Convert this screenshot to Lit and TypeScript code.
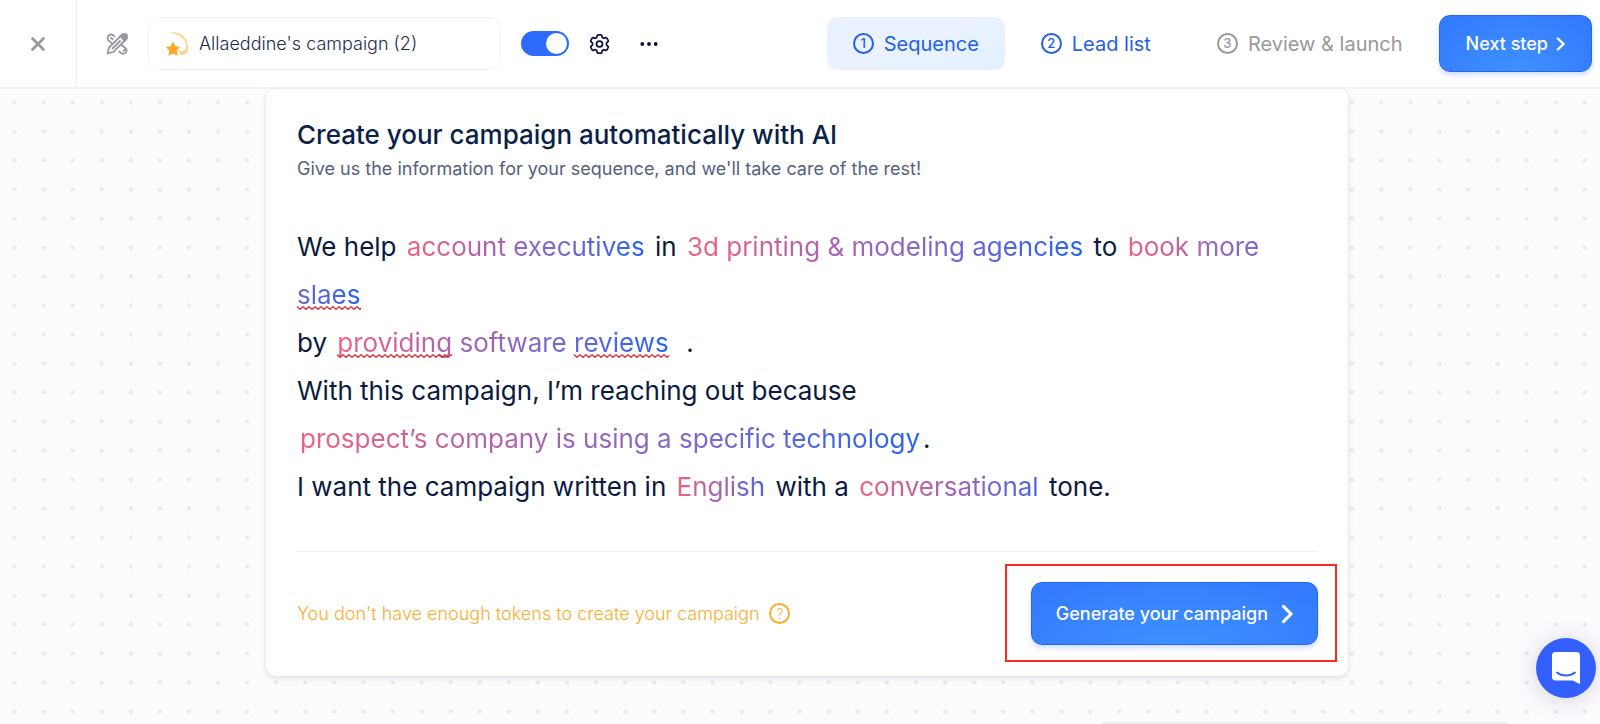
import { LitElement, html, css } from "lit";
import { customElement, state } from "lit/decorators.js";

@customElement("app-root")
export class AppRoot extends LitElement {
  @state() private active = true;

  static styles = css`
    :host {
      display: flex;
      flex-direction: column;
      min-height: 100vh;
      overflow: hidden;
      box-sizing: border-box;
      font-family: Inter, "Liberation Sans", sans-serif;
      color: #0b1f4b;
      background: #fdfbfe;
    }
    *, *::before, *::after { box-sizing: border-box; }
    button {
      font: inherit;
      color: inherit;
      background: none;
      border: 0;
      padding: 0;
      cursor: pointer;
    }
    svg { display: block; flex: none; }

    .bar {
      display: flex;
      align-items: center;
      height: 89px;
      padding-right: 8px;
      background: #fff;
      border-bottom: 2px solid #f3f2f5;
    }
    .close {
      display: grid;
      place-items: center;
      align-self: stretch;
      width: 77px;
      border-right: 1px solid #f0eef4;
      color: #97979d;
    }
    .magic { margin-left: 29px; color: #97979d; }
    .name {
      display: flex;
      align-items: center;
      gap: 10px;
      width: 353px;
      height: 53px;
      margin-left: 20px;
      padding: 0 16px;
      border: 1px solid #f3f1f6;
      border-radius: 12px;
    }
    .name input {
      flex: 1;
      min-width: 0;
      border: 0;
      padding: 0;
      outline: 0;
      background: none;
      font: 300 18px/24px Inter, "Liberation Sans", sans-serif;
      color: #1d2b4f;
    }
    .toggle {
      appearance: none;
      display: flex;
      width: 48px;
      height: 25px;
      margin: 0 0 0 20px;
      padding: 2px;
      border-radius: 13px;
      background: #c9ccd6;
      cursor: pointer;
    }
    .toggle::before {
      content: "";
      width: 21px;
      height: 21px;
      border-radius: 50%;
      background: #fff;
    }
    .toggle:checked { background: #2d6bff; justify-content: flex-end; }
    .gear { margin-left: 20px; color: #0b1540; }
    .more { margin-left: 30px; color: #0b1540; }

    .steps { display: flex; gap: 10px; margin-left: auto; }
    .step {
      display: flex;
      align-items: center;
      gap: 10px;
      height: 53px;
      padding: 0 26px;
      border-radius: 10px;
      font-size: 20px;
      color: #2460e8;
      text-decoration: none;
      white-space: nowrap;
    }
    .step.current { background: linear-gradient(160deg, #ebf2ff 40%, #e3f0ff); }
    .step.later { color: #98989c; margin-left: 4px; }
    .num {
      display: grid;
      place-items: center;
      width: 21px;
      height: 21px;
      border: 2px solid currentColor;
      border-radius: 50%;
      font-size: 13px;
      line-height: 13px;
      font-weight: 500;
    }
    .primary {
      display: flex;
      align-items: center;
      color: #fff;
      font-weight: 500;
      font-size: 18px;
      white-space: nowrap;
      border: 1px solid #2465ea;
      border-radius: 11px;
      background: radial-gradient(ellipse at 50% 110%, #3f92ff, #347cff 85%);
      box-shadow: 0 3px 5px #2d62ff38;
    }
    .next { height: 57px; gap: 8px; padding: 0 26px; margin-left: 10px; }

    .canvas {
      flex: 1;
      padding: 0 252px 48px 266px;
      background-image: radial-gradient(circle, #eae8ed 1px, #eae8ed00 3px);
      background-size: 29px 29px;
      background-position: 0 -1px;
      background-repeat: round repeat;
    }
    .card {
      padding: 30px 30px 31px 31px;
      background: #fff;
      border-radius: 10px;
      box-shadow: 0 2px 5px 1px #28203c1c;
    }
    h1 { margin: 0; font-size: 26px; line-height: 32px; font-weight: 500; }
    .lead { margin: 6px 0 0; font-size: 18px; line-height: 24px; color: #53617d; }
    .prompt { margin-top: 42px; font-size: 26px; line-height: 48px; color: #0b1a40; }
    .prompt p { margin: 0; }
    .fill {
      margin: 0 3px;
      outline: 0;
      color: transparent;
      background: linear-gradient(90deg, #ee6181, #9a66b8 45%, #7a68cc 65%, #2463f5);
      -webkit-background-clip: text;
      background-clip: text;
    }
    .half { background-image: linear-gradient(90deg, #ee6181, #9466bd 60%, #4b63e2); }
    .typo {
      background: url("data:image/svg+xml,%3Csvg xmlns='http://www.w3.org/2000/svg' width='6' height='4'%3E%3Cpath d='M-1 0L0 .7 3 3.300 6 .7 7 0' fill='none' stroke='%23e3242b' stroke-width='1.300'/%3E%3C/svg%3E") 0 100% / 6px 4px repeat-x;
    }
    .foot {
      display: flex;
      align-items: center;
      justify-content: space-between;
      margin-top: 40px;
      padding-top: 30px;
      border-top: 1px solid #f0f0f2;
    }
    .warn { display: flex; align-items: center; gap: 10px; font-size: 18px; font-weight: 300; line-height: 24px; color: #f9ae30; }
    .hint { display: grid; place-items: center; width: 21px; height: 21px; border: 2px solid currentColor; border-radius: 50%; font-size: 14px; line-height: 14px; }
    .mark { position: relative; }
    .mark::after {
      content: "";
      position: absolute;
      inset: -18px -19px -17px -26px;
      border: 2px solid #fa2c19;
      pointer-events: none;
    }
    .generate { height: 63px; gap: 13px; padding: 0 24px; }
    .chat {
      position: fixed;
      right: 4px;
      bottom: 26px;
      display: grid;
      place-items: center;
      width: 60px;
      height: 60px;
      border-radius: 50%;
      background: #345fff;
      box-shadow: 0 2px 24px #20203a30;
    }
    .edge { position: fixed; right: 93px; bottom: 0; width: 405px; height: 2px; background: #f1eef1; }
  `;

  private chevron(w: number, h: number) {
    return html`<svg width=${w} height=${h} viewBox="0 0 10 18" preserveAspectRatio="none" fill="none" stroke="#fff" stroke-width="2.6" stroke-linecap="round" stroke-linejoin="round" aria-hidden="true"><path d="M2 2l6.400 7L2 16"/></svg>`;
  }

  render() {
    return html`
      <header class="bar">
        <button class="close" aria-label="Close">
          <svg width="14" height="14" viewBox="0 0 14 14" fill="none" stroke="currentColor" stroke-width="2.600" stroke-linecap="round"><path d="M1.500 1.500l11 11M12.500 1.500l-11 11"/></svg>
        </button>
        <button class="magic" aria-label="Design">
          <svg width="22" height="22" viewBox="0 0 22 22" fill="none" stroke="currentColor" stroke-width="1.800" stroke-linecap="round" stroke-linejoin="round">
            <path d="M1.500 20.500l1.600-6L14.500 3.200l4.300 4.300L7.500 18.800z"/>
            <path d="M6.500 15.500L14 8"/>
            <path d="M14.500 3.200l2-2h3.300l1.200 1.200v3l-2.200 2.100z" fill="currentColor"/>
            <path d="M5.500 10.200L2.300 7.300C.5 5 2.300 1.200 5.500 1.500c1.200.2 2 1 2.800 1.900M5 4.800l1.500 1.400"/>
            <path d="M15.500 12l3.900 3.200c2.600 2.500.4 6-2.900 5.500-1.400-.3-2.500-1.200-3.300-2.200M19.500 16l-2 1.800"/>
          </svg>
        </button>
        <label class="name">
          <svg width="24" height="26" viewBox="0 0 24 26" aria-hidden="true">
            <path d="M3 2C13-1 24 6 23 18c-.3 4-3 6-8 5.800L13 20c4 .6 8-.3 8.300-4C21.500 8.500 14 1.500 3 2z" fill="#fdd38a"/>
            <path d="M8 10.500l2.300 4.800 5 .7-3.600 3.600.9 5.200L8 22.500 3.400 24.800l.9-5.200L.7 16l5-.7z" fill="#ffa722"/>
          </svg>
          <input aria-label="Campaign name" .value=${"Allaeddine's campaign (2)"} />
        </label>
        <input class="toggle" type="checkbox" role="switch" aria-label="Campaign active" .checked=${this.active}
          @change=${(e: Event) => (this.active = (e.target as HTMLInputElement).checked)} />
        <button class="gear" aria-label="Settings">
          <svg width="21" height="22" viewBox="0 0 24 24" fill="none" stroke="currentColor" stroke-width="2" stroke-linejoin="round">
            <circle cx="12" cy="12" r="3.400"/>
            <path d="M10.500 1.500h3q1 0 1.200 1l.4 2 1.800 1 2-.7q1-.3 1.500.5l1.500 2.600q.5.900-.3 1.500l-1.600 1.500v2.200l1.600 1.500q.8.600.3 1.500l-1.500 2.600q-.5.800-1.500.5l-2-.7-1.800 1-.4 2q-.2 1-1.200 1h-3q-1 0-1.200-1l-.4-2-1.800-1-2 .7q-1 .3-1.500-.5l-1.500-2.600q-.5-.9.300-1.500l1.600-1.500v-2.200L2.400 9.400q-.8-.6-.3-1.500l1.500-2.600q.5-.8 1.500-.5l2 .7 1.800-1 .4-2q.2-1 1.200-1z"/>
          </svg>
        </button>
        <button class="more" aria-label="More">
          <svg width="18" height="4" viewBox="0 0 18 4" fill="currentColor"><circle cx="2.300" cy="2" r="1.900"/><circle cx="9" cy="2" r="1.900"/><circle cx="15.700" cy="2" r="1.900"/></svg>
        </button>
        <nav class="steps">
          <a class="step current" href="#sequence"><span class="num">1</span>Sequence</a>
          <a class="step" href="#leads"><span class="num">2</span>Lead list</a>
          <a class="step later" href="#review"><span class="num">3</span>Review &amp; launch</a>
        </nav>
        <button class="primary next">Next step ${this.chevron(9, 14)}</button>
      </header>

      <main class="canvas">
        <section class="card">
          <h1>Create your campaign automatically with AI</h1>
          <p class="lead">Give us the information for your sequence, and we'll take care of the rest!</p>
          <div class="prompt">
            <p>We help <span class="fill" contenteditable="true" spellcheck="false">account executives</span> in <span class="fill" contenteditable="true" spellcheck="false">3d printing &amp; modeling agencies</span> to <span class="fill" contenteditable="true" spellcheck="false">book more <span class="typo">slaes</span></span></p>
            <p>by <span class="fill" contenteditable="true" spellcheck="false"><span class="typo">providing</span> software <span class="typo">reviews</span></span>&nbsp; .</p>
            <p>With this campaign, I’m reaching out because</p>
            <p><button class="fill">prospect’s company is using a specific technology</button>.</p>
            <p>I want the campaign written in <button class="fill half">English</button> with a <button class="fill half">conversational</button> tone.</p>
          </div>
          <div class="foot">
            <div class="warn">You don't have enough tokens to create your campaign <span class="hint">?</span></div>
            <div class="mark"><button class="primary generate">Generate your campaign ${this.chevron(12, 20)}</button></div>
          </div>
        </section>
      </main>
      <div class="edge"></div>
      <button class="chat" aria-label="Open chat">
        <svg width="28" height="32" viewBox="0 0 28 32" aria-hidden="true">
          <path d="M3.500 0h21A3.500 3.500 0 0 1 28 3.500V32l-7.500-3.500h-17A3.500 3.500 0 0 1 0 25V3.500A3.500 3.500 0 0 1 3.500 0z" fill="#fff"/>
          <path d="M5 20.500c5 4 13 4 18 0" fill="none" stroke="#345fff" stroke-width="1.800" stroke-linecap="round"/>
        </svg>
      </button>
    `;
  }
}
